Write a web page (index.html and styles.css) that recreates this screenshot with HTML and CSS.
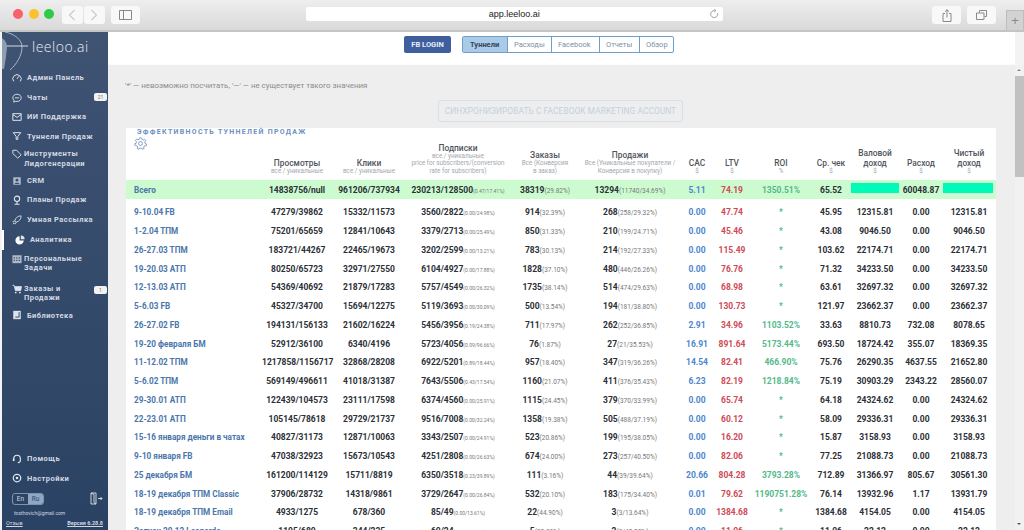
FILE: index.html
```html
<!DOCTYPE html>
<html lang="en">
<head>
  <meta charset="UTF-8" />
  <meta name="viewport" content="width=device-width, initial-scale=1.0"/>
  <title>Leeloo.ai</title>
  <link rel="stylesheet" href="styles.css">
</head>
<body>

  <!-- Browser toolbar -->
  <div class="toolbar">
    <div class="lights">
      <span class="light red"></span>
      <span class="light yellow"></span>
      <span class="light green"></span>
    </div>
    <div class="tool-btn nav-btn">
      <svg width="8" height="12" viewBox="0 0 8 12"><path d="M6.500 1 1.500 6l5 5" fill="none" stroke="#c9c9c9" stroke-width="1.100"/></svg>
    </div>
    <div class="tool-btn nav-btn next">
      <svg width="8" height="12" viewBox="0 0 8 12"><path d="M1.500 1l5 5-5 5" fill="none" stroke="#c9c9c9" stroke-width="1.100"/></svg>
    </div>
    <div class="tool-btn side-btn">
      <svg width="13" height="10" viewBox="0 0 13 10"><path d="M.5.5h12v9H.5zM4.500.5v9" fill="none" stroke="#888" stroke-width="1"/></svg>
    </div>
    <div class="url-bar">
      <span class="url-text">app.leeloo.ai</span>
      <svg class="reload" width="9" height="10" viewBox="0 0 9 10"><path d="M7.600 4.200A3.500 3.500 0 1 1 4.500 1.600M4.200.2 6 1.600 4.200 3" fill="none" stroke="#888" stroke-width=".8"/></svg>
    </div>
    <div class="tool-btn share-btn">
      <svg width="10" height="13" viewBox="0 0 10 13"><path d="M3 4.500H1v8h8v-8H7M5 8.500V.8M3 2.600 5 .7l2 1.900" fill="none" stroke="#888" stroke-width="1"/></svg>
    </div>
    <div class="tool-btn tabs-btn">
      <svg width="11" height="10" viewBox="0 0 11 10"><path d="M3.500 2.500V.5h7v6h-2M.5 3h7.500v6.500H.5z" fill="none" stroke="#888" stroke-width="1"/></svg>
    </div>
    <div class="new-tab">+</div>
  </div>

  <div class="app">
    <!-- Sidebar Navigation -->
    <nav class="sidebar">
      <div class="logo">
        <svg width="26" height="38" viewBox="0 0 26 38">
          <path d="M3 0C13 2 20 8 20 15C20 23 15 32 8 38" fill="none" stroke="#aab5c6" stroke-width="1"/>
          <path d="M0 14h26" stroke="#d5dbe4" stroke-width="1"/>
          <path d="M0 6c3 2 5 5 5 9l-1 10-2 12H0z" fill="#8f9db2"/>
        </svg>
        <span class="logo-text">leeloo.ai</span>
      </div>

      <a class="nav-item">
        <svg viewBox="0 0 12 12"><path d="M2 10a5 5 0 1 1 8 0M6 7l2-3" fill="none" stroke="#dfe4ec" stroke-width="1.200"/></svg>
        <span>Админ Панель</span>
      </a>
      <a class="nav-item">
        <svg viewBox="0 0 12 12"><path d="M6 1.500c3 0 5 1.800 5 4.300s-2 4.300-5 4.300l-1.500-.1L2 11l.5-2.200C1.500 8 1 7 1 5.800c0-2.500 2-4.300 5-4.300zM3.500 5.800h5" fill="none" stroke="#dfe4ec" stroke-width="1.100"/></svg>
        <span>Чаты</span>
        <b class="badge">21</b>
      </a>
      <a class="nav-item">
        <svg viewBox="0 0 12 12"><path d="M1 2h10v8H1zM1 3l5 3.500L11 3" fill="none" stroke="#dfe4ec" stroke-width="1.200"/></svg>
        <span>ИИ Поддержка</span>
      </a>
      <a class="nav-item">
        <svg viewBox="0 0 12 12"><path d="M1.500 2h9L7 6.500V10H5V6.500z" fill="none" stroke="#dfe4ec" stroke-width="1.200"/></svg>
        <span>Туннели Продаж</span>
      </a>
      <a class="nav-item two">
        <svg viewBox="0 0 12 12"><path d="M1 1.500h4.500L11 7l-4 4-6-5.500z" fill="none" stroke="#dfe4ec" stroke-width="1.100"/></svg>
        <span>Инструменты<br>Лидогенерации</span>
      </a>
      <a class="nav-item">
        <svg viewBox="0 0 12 12"><path d="M1.500 1.500h9v9h-9z" fill="#aeb8c8"/><circle cx="6" cy="5" r="1.700" fill="#3a4f6e"/><path d="M3 9.500c.5-2 5.500-2 6 0" fill="#3a4f6e"/></svg>
        <span>CRM</span>
      </a>
      <a class="nav-item">
        <svg viewBox="0 0 12 12"><circle cx="6" cy="4.500" r="3.200" fill="none" stroke="#dfe4ec" stroke-width="1.300"/><path d="M6 8v2.500M3 11h6" stroke="#dfe4ec" stroke-width="1.300"/></svg>
        <span>Планы Продаж</span>
      </a>
      <a class="nav-item">
        <svg viewBox="0 0 12 12"><path d="M11 1C7 1 4 3.500 3.500 7L5 8.500C8.500 8 11 5 11 1zM3.500 7 1 8l1 1M5 8.500 4 11l-1-1M2.500 9.500 1 11" fill="none" stroke="#dfe4ec" stroke-width="1"/></svg>
        <span>Умная Рассылка</span>
      </a>
      <a class="nav-item active">
        <svg viewBox="0 0 12 12"><path d="M5.500 1.500a5 5 0 1 0 5 5h-5z" fill="#fff"/><path d="M7 .5A4.500 4.500 0 0 1 11.500 5H7z" fill="#dfe4ec"/></svg>
        <span>Аналитика</span>
      </a>
      <a class="nav-item two">
        <svg viewBox="0 0 12 12"><path d="M.5 1.500h11V11H.5z" fill="#aeb8c8"/><path d="M2 4h1.500v1.500H2zM5 4h1.500v1.500H5zM8 4h1.500v1.500H8zM2 7h1.500v1.500H2zM5 7h1.500v1.500H5zM8 7h1.500v1.500H8z" fill="#3a4f6e"/></svg>
        <span>Персональные<br>Задачи</span>
      </a>
      <a class="nav-item two orders">
        <svg viewBox="0 0 12 12"><path d="M.5 1.500h2L4 8h6.500L11.500 3H3" fill="#dfe4ec" stroke="#dfe4ec" stroke-width=".8"/><circle cx="4.500" cy="10.300" r="1.100" fill="#dfe4ec"/><circle cx="9.500" cy="10.300" r="1.100" fill="#dfe4ec"/></svg>
        <span>Заказы и<br>Продажи</span>
        <b class="badge">1</b>
      </a>
      <a class="nav-item">
        <svg viewBox="0 0 12 12"><path d="M1.500 1h9v10h-9z" fill="#dfe4ec"/><path d="M4 8.500h4.500v-6" fill="none" stroke="#3a4f6e" stroke-width="1.200"/></svg>
        <span>Библиотека</span>
      </a>

      <div class="side-bottom">
        <a class="nav-item">
          <svg viewBox="0 0 12 12"><path d="M2 7V5.500a4 4 0 0 1 8 0V8c0 1.500-1 2.300-3 2.300" fill="none" stroke="#e8ecf2" stroke-width="1.300"/><path d="M1 5.500h2v3H1z" fill="#e8ecf2"/></svg>
          <span>Помощь</span>
        </a>
        <a class="nav-item">
          <svg viewBox="0 0 12 12"><circle cx="6" cy="6" r="4.500" fill="none" stroke="#dfe4ec" stroke-width="1.500"/><circle cx="6" cy="6" r="1.600" fill="#dfe4ec"/></svg>
          <span>Настройки</span>
        </a>
        <div class="lang-row">
          <div class="lang">
            <span>En</span>
            <span class="on">Ru</span>
          </div>
          <svg width="13" height="13" viewBox="0 0 13 13"><path d="M1 1h5v11H1zM1 1l3 1.500v8L6 12M8 6.500h4M10.500 5l1.500 1.500L10.500 8" fill="none" stroke="#dfe4ec" stroke-width=".9"/></svg>
        </div>
        <div class="email">tosthovich@gmail.com</div>
        <div class="side-foot">
          <u>Отзыв</u>
          <u class="version">Версия 6.28.8</u>
        </div>
      </div>
    </nav>

    <!-- Main area -->
    <div class="main">
      <div class="topbar">
        <button class="fb-login">FB LOGIN</button>
        <div class="tabs">
          <a class="tab active">Туннели</a>
          <a class="tab">Расходы</a>
          <a class="tab">Facebook</a>
          <a class="tab">Отчеты</a>
          <a class="tab">Обзор</a>
        </div>
      </div>

      <div class="content">
        <p class="hint">'*' — невозможно посчитать, '—' — не существует такого значения</p>
        <div class="sync-row">
          <button class="sync-btn">СИНХРОНИЗИРОВАТЬ С FACEBOOK MARKETING ACCOUNT</button>
        </div>

        <div class="card">
          <h3 class="card-title">ЭФФЕКТИВНОСТЬ ТУННЕЛЕЙ ПРОДАЖ</h3>
          <table class="funnels">
            <colgroup>
              <col class="c-name"><col class="c-views"><col class="c-clicks"><col class="c-subs"><col class="c-orders"><col class="c-sales">
              <col class="c-cac"><col class="c-ltv"><col class="c-roi"><col class="c-avg"><col class="c-gross"><col class="c-spend"><col class="c-net">
            </colgroup>
            <thead>
              <tr>
                <th class="gear-cell">
                  <svg width="13" height="13" viewBox="0 0 24 24"><path d="M12 1.500l2 .2.600 2.800 2.600 1.100 2.400-1.500 2.200 2.900-2 2.200.6 2.700 2.700 1-.8 3.500-2.900-.1-1.700 2.200 1 2.700-3.300 1.500-1.700-2.300-2.800 0-1.700 2.300-3.300-1.500 1-2.700L5 15.900l-2.900.1-.8-3.500 2.700-1 .6-2.700-2-2.200 2.200-2.900 2.400 1.500L9.400 4.500 10 1.700z" fill="none" stroke="#6d8db5" stroke-width="1.500"/><circle cx="12" cy="12" r="3.600" fill="none" stroke="#6d8db5" stroke-width="1.500"/></svg>
                </th>
                <th>Просмотры<small>все / уникальные</small></th>
                <th>Клики<small>все / уникальные</small></th>
                <th>Подписки<small>все / уникальные<br>price for subscribers/(conversion<br>rate for subscribers)</small></th>
                <th>Заказы<small>Все (Конверсия<br>в заказ)</small></th>
                <th>Продажи<small>Все (Уникальные покупатели /<br>Конверсия в покупку)</small></th>
                <th>CAC<small>$</small></th>
                <th>LTV<small>$</small></th>
                <th>ROI<small>%</small></th>
                <th>Ср. чек<small>$</small></th>
                <th>Валовой<br>доход<small>$</small></th>
                <th>Расход<small>$</small></th>
                <th>Чистый<br>доход<small>$</small></th>
              </tr>
            </thead>
            <tbody>
              <tr class="total">
                <td>Всего</td><td>14838756/null</td><td>961206/737934</td><td>230213/128500<small>(0.47/17.41%)</small></td><td>38319<small class="m">(29.82%)</small></td><td>13294<small class="m">(11740/34.69%)</small></td><td>5.11</td><td>74.19</td><td>1350.51%</td><td>65.52</td><td><span class="money-bar"></span></td><td>60048.87</td><td><span class="money-bar"></span></td>
              </tr>
              <tr class="gap"><td colspan="13"></td></tr>
              <tr><td>9-10.04 FB</td><td>47279/39862</td><td>15332/11573</td><td>3560/2822<small>(0.00/24.98%)</small></td><td>914<small class="m">(32.39%)</small></td><td>268<small class="m">(258/29.32%)</small></td><td>0.00</td><td>47.74</td><td>*</td><td>45.95</td><td>12315.81</td><td>0.00</td><td>12315.81</td></tr>
              <tr><td>1-2.04 ТПМ</td><td>75201/65659</td><td>12841/10643</td><td>3379/2713<small>(0.00/25.49%)</small></td><td>850<small class="m">(31.33%)</small></td><td>210<small class="m">(199/24.71%)</small></td><td>0.00</td><td>45.46</td><td>*</td><td>43.08</td><td>9046.50</td><td>0.00</td><td>9046.50</td></tr>
              <tr><td>26-27.03 ТПМ</td><td>183721/44267</td><td>22465/19673</td><td>3202/2599<small>(0.00/13.21%)</small></td><td>783<small class="m">(30.13%)</small></td><td>214<small class="m">(192/27.33%)</small></td><td>0.00</td><td>115.49</td><td>*</td><td>103.62</td><td>22174.71</td><td>0.00</td><td>22174.71</td></tr>
              <tr><td>19-20.03 АТП</td><td>80250/65723</td><td>32971/27550</td><td>6104/4927<small>(0.00/17.88%)</small></td><td>1828<small class="m">(37.10%)</small></td><td>480<small class="m">(446/26.26%)</small></td><td>0.00</td><td>76.76</td><td>*</td><td>71.32</td><td>34233.50</td><td>0.00</td><td>34233.50</td></tr>
              <tr><td>12-13.03 АТП</td><td>54369/40692</td><td>21879/17283</td><td>5757/4549<small>(0.00/26.32%)</small></td><td>1735<small class="m">(38.14%)</small></td><td>514<small class="m">(474/29.63%)</small></td><td>0.00</td><td>68.98</td><td>*</td><td>63.61</td><td>32697.32</td><td>0.00</td><td>32697.32</td></tr>
              <tr><td>5-6.03 FB</td><td>45327/34700</td><td>15694/12275</td><td>5119/3693<small>(0.00/30.09%)</small></td><td>500<small class="m">(13.54%)</small></td><td>194<small class="m">(181/38.80%)</small></td><td>0.00</td><td>130.73</td><td>*</td><td>121.97</td><td>23662.37</td><td>0.00</td><td>23662.37</td></tr>
              <tr><td>26-27.02 FB</td><td>194131/156133</td><td>21602/16224</td><td>5456/3956<small>(0.19/24.38%)</small></td><td>711<small class="m">(17.97%)</small></td><td>262<small class="m">(252/36.85%)</small></td><td>2.91</td><td>34.96</td><td>1103.52%</td><td>33.63</td><td>8810.73</td><td>732.08</td><td>8078.65</td></tr>
              <tr><td>19-20 февраля БМ</td><td>52912/36100</td><td>6340/4196</td><td>5723/4056<small>(0.09/96.66%)</small></td><td>76<small class="m">(1.87%)</small></td><td>27<small class="m">(21/35.53%)</small></td><td>16.91</td><td>891.64</td><td>5173.44%</td><td>693.50</td><td>18724.42</td><td>355.07</td><td>18369.35</td></tr>
              <tr><td>11-12.02 ТПМ</td><td>1217858/1156717</td><td>32868/28208</td><td>6922/5201<small>(0.89/18.44%)</small></td><td>957<small class="m">(18.40%)</small></td><td>347<small class="m">(319/36.26%)</small></td><td>14.54</td><td>82.41</td><td>466.90%</td><td>75.76</td><td>26290.35</td><td>4637.55</td><td>21652.80</td></tr>
              <tr><td>5-6.02 ТПМ</td><td>569149/496611</td><td>41018/31387</td><td>7643/5506<small>(0.43/17.54%)</small></td><td>1160<small class="m">(21.07%)</small></td><td>411<small class="m">(376/35.43%)</small></td><td>6.23</td><td>82.19</td><td>1218.84%</td><td>75.19</td><td>30903.29</td><td>2343.22</td><td>28560.07</td></tr>
              <tr><td>29-30.01 АТП</td><td>122439/104573</td><td>23111/17598</td><td>6374/4560<small>(0.00/25.91%)</small></td><td>1115<small class="m">(24.45%)</small></td><td>379<small class="m">(370/33.99%)</small></td><td>0.00</td><td>65.74</td><td>*</td><td>64.18</td><td>24324.62</td><td>0.00</td><td>24324.62</td></tr>
              <tr><td>22-23.01 АТП</td><td>105145/78618</td><td>29729/21737</td><td>9516/7008<small>(0.00/32.24%)</small></td><td>1358<small class="m">(19.38%)</small></td><td>505<small class="m">(488/37.19%)</small></td><td>0.00</td><td>60.12</td><td>*</td><td>58.09</td><td>29336.31</td><td>0.00</td><td>29336.31</td></tr>
              <tr><td>15-16 января деньги в чатах</td><td>40827/31173</td><td>12871/10063</td><td>3343/2507<small>(0.00/24.91%)</small></td><td>523<small class="m">(20.86%)</small></td><td>199<small class="m">(195/38.05%)</small></td><td>0.00</td><td>16.20</td><td>*</td><td>15.87</td><td>3158.93</td><td>0.00</td><td>3158.93</td></tr>
              <tr><td>9-10 января FB</td><td>47038/32923</td><td>15673/10543</td><td>4251/2808<small>(0.00/26.63%)</small></td><td>674<small class="m">(24.00%)</small></td><td>273<small class="m">(257/40.50%)</small></td><td>0.00</td><td>82.06</td><td>*</td><td>77.25</td><td>21088.73</td><td>0.00</td><td>21088.73</td></tr>
              <tr><td>25 декабря БМ</td><td>161200/114129</td><td>15711/8819</td><td>6350/3518<small>(0.23/39.89%)</small></td><td>111<small class="m">(3.16%)</small></td><td>44<small class="m">(39/39.64%)</small></td><td>20.66</td><td>804.28</td><td>3793.28%</td><td>712.89</td><td>31366.97</td><td>805.67</td><td>30561.30</td></tr>
              <tr><td>18-19 декабря ТПМ Classic</td><td>37906/28732</td><td>14318/9861</td><td>3729/2647<small>(0.00/26.84%)</small></td><td>532<small class="m">(20.10%)</small></td><td>183<small class="m">(175/34.40%)</small></td><td>0.01</td><td>79.62</td><td>1190751.28%</td><td>76.14</td><td>13932.96</td><td>1.17</td><td>13931.79</td></tr>
              <tr><td>18-19 декабря ТПМ Email</td><td>4933/1275</td><td>678/360</td><td>85/49<small>(0.00/13.61%)</small></td><td>22<small class="m">(44.90%)</small></td><td>3<small class="m">(3/13.64%)</small></td><td>0.00</td><td>1384.68</td><td>*</td><td>1384.68</td><td>4154.05</td><td>0.00</td><td>4154.05</td></tr>
              <tr><td>Запуск 20.12 Leonardo</td><td>1105/680</td><td>344/235</td><td>60/24<small>(0.11/14.14%)</small></td><td>5<small class="m">(20.83%)</small></td><td>2<small class="m">(2/40.00%)</small></td><td>0.00</td><td>11.06</td><td>*</td><td>11.06</td><td>22.12</td><td>0.00</td><td>22.12</td></tr>
            </tbody>
          </table>
        </div>
      </div>
    </div>

    <!-- Scrollbar -->
    <div class="scrollbar">
      <span class="arrow up"></span>
      <span class="thumb"></span>
      <span class="arrow down"></span>
    </div>
  </div>

</body>
</html>
```

FILE: styles.css
```css
/* Reset & base */
* { box-sizing: border-box; margin: 0; padding: 0; }
html, body { height: 100%; overflow: hidden; }
body {
  display: flex;
  flex-direction: column;
  font-family: Roboto, 'Liberation Sans', sans-serif;
  background: #fff;
  color: #222;
}

/* Browser toolbar */
.toolbar {
  flex: 0 0 30px;
  display: flex;
  align-items: flex-start;
  padding-top: 6px;
  background: linear-gradient(#eeeeee, #d9d9d9);
  border-bottom: 2px solid #c4c4c4;
}
.lights { display: flex; gap: 5.500px; margin: 3px 0 0 13px; }
.light { width: 10px; height: 10px; border-radius: 50%; }
.light.red { background: #fb5f69; }
.light.yellow { background: #fcc22e; }
.light.green { background: #2ecb47; }
.tool-btn {
  height: 18px;
  background: #f8f8f8;
  border-radius: 3px;
  display: flex;
  align-items: center;
  justify-content: center;
}
.nav-btn { width: 21px; margin-left: 1px; }
.lights + .nav-btn { margin-left: 8px; }
.side-btn { width: 29px; margin-left: 6px; }
.url-bar {
  width: 418px;
  height: 14px;
  margin: 1px 0 0 166px;
  background: #fff;
  border-radius: 2px;
  display: flex;
  align-items: center;
  padding: 0 4px 0 183px;
  font: 9px 'Liberation Sans', sans-serif;
  color: #222;
}
.url-text { flex: 1; }
.share-btn { width: 29px; margin-left: 209px; }
.tabs-btn { width: 29px; margin-left: 6px; }
.new-tab {
  width: 18px;
  height: 20px;
  margin: 4px 0 0 10px;
  background: #d2d2d2;
  border: 1px solid #bdbdbd;
  border-bottom: none;
  color: #8a8a8a;
  font: 13px/20px 'Liberation Sans', sans-serif;
  text-align: center;
}

.app { flex: 1; display: flex; min-height: 0; padding-left: 2px; background: #f3f3f3; }

/* Sidebar nav */
.sidebar {
  flex: 0 0 106px;
  display: flex;
  flex-direction: column;
  background: linear-gradient(#3f5373, #2a4263);
  color: #d3d9e3;
  padding-bottom: 4px;
}
.logo { display: flex; align-items: flex-start; height: 36.500px; }
.logo-text {
  margin: 5px 0 0 4px;
  color: #e9edf3;
  font: 300 14px 'Open Sans', sans-serif;
  letter-spacing: .5px;
}
.nav-item {
  position: relative;
  display: flex;
  align-items: center;
  gap: 5px;
  min-height: 19.400px;
  padding-left: 10px;
  font-size: 7.500px;
  font-weight: 700;
  line-height: 9.500px;
  letter-spacing: .45px;
}
.nav-item svg { flex: 0 0 10px; width: 10px; height: 10px; }
.nav-item.two { align-items: flex-start; gap: 2px; min-height: 25px; padding-top: 3px; padding-bottom: 3px; }
.nav-item.orders { margin-top: 5px; }
.nav-item.active { padding-left: 11px; margin: 1px 0; border-left: 2px solid #fff; }
.badge {
  position: absolute;
  right: 1px;
  top: 5px;
  width: 13px;
  height: 8px;
  background: #f2f2f2;
  border-radius: 2px;
  color: #777;
  font-size: 5px;
  line-height: 8px;
  font-weight: 400;
  text-align: center;
  letter-spacing: 0;
}
.side-bottom { margin-top: auto; }
.lang-row { display: flex; align-items: center; justify-content: space-between; padding: 4px 5px 0 10px; }
.lang {
  display: flex;
  height: 12px;
  border: 1px solid #7f93ad;
  border-radius: 3px;
  overflow: hidden;
  font-size: 6.500px;
  line-height: 10px;
}
.lang span { width: 15px; text-align: center; }
.lang .on { background: #8ea7c6; color: #2f4668; }
.email { margin: 5px 0 0 12px; font-size: 5px; color: #cfd6e0; }
.side-foot { display: flex; justify-content: space-between; padding: 4px 5px 0 4px; font-size: 5.500px; color: #cfd6e0; }
.version { font-weight: 700; }

/* Main area */
.main { flex: 1; min-width: 0; display: flex; flex-direction: column; }
.topbar {
  flex: 0 0 33px;
  display: flex;
  align-items: flex-start;
  padding: 4px 0 0 296px;
  background: #fff;
  border-bottom: 1px solid #fbfbfb;
}
.fb-login {
  width: 47px;
  height: 17px;
  border: none;
  border-radius: 2px;
  background: #3f5e9d;
  color: #e8edf6;
  font: 700 7.500px Roboto, sans-serif;
}
.tabs { display: flex; margin-left: 11px; height: 17px; border: 1px solid #6f9fc9; border-radius: 2px; }
.tab {
  padding: 0 6px;
  border-left: 1px solid #6f9fc9;
  color: #7d8fa5;
  font-size: 7.500px;
  line-height: 15px;
  white-space: nowrap;
}
.tab:nth-child(1) { width: 44px; padding-left: 7px; }
.tab:nth-child(2) { width: 44px; }
.tab:nth-child(3) { width: 48px; }
.tab:nth-child(4) { width: 40px; }
.tab:nth-child(5) { width: 34px; }
.tab.active { border-left: none; background: #a9cbe8; color: #36465a; font-weight: 700; }

.content { flex: 1; min-height: 0; background: #eeeeee; padding: 0 19px 0 17px; }
.hint { padding-top: 16px; height: 35px; font-size: 7.900px; line-height: 9px; color: #8c8c8c; }
.sync-row { display: flex; padding-left: 313px; }
.sync-btn {
  width: 245px;
  height: 22px;
  background: transparent;
  border: 1px solid #d6e0e9;
  border-radius: 3px;
  color: #c2d1e0;
  font: 8.300px Roboto, sans-serif;
  letter-spacing: .1px;
  white-space: nowrap;
}

/* Funnel table */
.card { margin: 6px 0 0 1px; background: #fff; }
.card-title {
  padding: 0 0 0 11px;
  height: 9px;
  font-size: 7px;
  line-height: 8px;
  font-weight: 700;
  letter-spacing: 1.300px;
  color: #6b90bf;
}
.funnels { width: 870px; table-layout: fixed; border-collapse: collapse; }
.c-name { width: 136px; }
.c-views { width: 70px; }
.c-clicks { width: 74px; }
.c-subs { width: 104px; }
.c-orders { width: 70px; }
.c-sales { width: 100px; }
.c-cac { width: 34px; }
.c-ltv { width: 36px; }
.c-roi { width: 62px; }
.c-avg { width: 38px; }
.c-gross { width: 50px; }
.c-spend { width: 42px; }
.c-net { width: 54px; }
.funnels th {
  height: 43px;
  padding-bottom: 5px;
  vertical-align: bottom;
  font-size: 8.400px;
  line-height: 10px;
  font-weight: 500;
  color: #4f545b;
}
.funnels th small {
  display: block;
  font-size: 6.300px;
  line-height: 7.500px;
  font-weight: 400;
  color: #a3a7ad;
  white-space: nowrap;
}
.funnels th.gear-cell { vertical-align: top; text-align: left; padding: 0 0 0 8px; }
.funnels td {
  height: 18.750px;
  padding: 0;
  text-align: center;
  font-size: 8.500px;
  font-weight: 700;
  color: #2b2f36;
  white-space: nowrap;
}
.funnels td small { font-size: 5px; font-weight: 400; color: #777; }
.funnels td small.m { font-size: 6.500px; }
.funnels td:nth-child(1) { padding-left: 8px; text-align: left; font-size: 8.200px; color: #4a76ab; }
.funnels td:nth-child(7) { color: #4a86cf; }
.funnels td:nth-child(8) { color: #cf4a55; }
.funnels td:nth-child(9) { color: #53b98a; }
.funnels tr.total td { height: 19px; background: #cdfbd0; }
.funnels tr.gap td { height: 4px; }
.money-bar { display: block; height: 10px; margin: 0 1px 4px; background: #00fbb9; }
.funnels td:last-child .money-bar { margin-right: 3px; }

/* Scrollbar */
.scrollbar {
  flex: 0 0 9px;
  display: flex;
  flex-direction: column;
  margin-top: 33px;
  background: #f1f1f1;
}
.thumb { flex: 0 0 101px; background: #c1c1c1; }
.arrow { flex: 0 0 11px; position: relative; }
.arrow::after {
  content: '';
  position: absolute;
  left: 2px;
  top: 4px;
  border: 2.500px solid transparent;
}
.arrow.up::after { border-bottom-color: #888; border-top: none; }
.arrow.down { margin-top: auto; }
.arrow.down::after { border-top-color: #555; border-bottom: none; }
```
